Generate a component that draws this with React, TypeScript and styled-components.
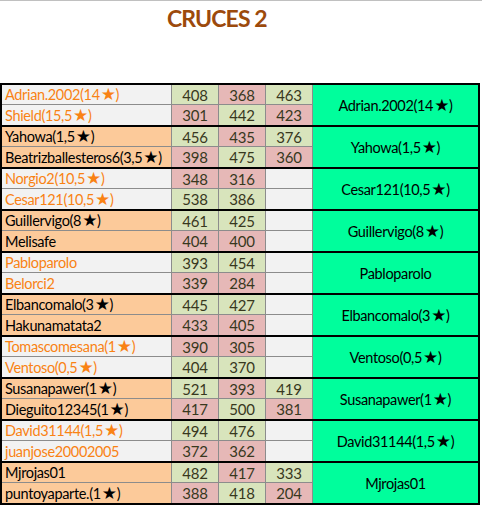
import styled, { createGlobalStyle } from 'styled-components'

const GlobalStyle = createGlobalStyle`
  html, body {
    margin: 0;
    padding: 0;
    background: #ffffff;
  }
`

const Page = styled.div`
  width: 482px;
  height: 508px;
  border-top: 1px solid #c0c0c0;
  box-sizing: border-box;
  font-family: Lato, "Open Sans", sans-serif;
  overflow: hidden;
`

const Title = styled.h1`
  margin: 0;
  padding: 3px 0 0 167px;
  height: 82px;
  box-sizing: border-box;
  font-size: 23px;
  font-weight: 700;
  color: #9c4a0c;
  letter-spacing: -0.9px;
`

const Table = styled.div`
  width: 480px;
  border: 2px solid #000;
  border-top: none;
  box-sizing: border-box;
`

const Pair = styled.div`
  display: grid;
  grid-template-columns: 170px 47px 47px 47px 1fr;
  grid-template-rows: 20px 20px;
  border-top: 2px solid #000;
`

const Name = styled.div<{ $alt: boolean; $first?: boolean }>`
  display: flex;
  align-items: center;
  padding-left: 3px;
  font-size: 14.5px;
  letter-spacing: -0.35px;
  white-space: nowrap;
  overflow: hidden;
  background: ${p => (p.$alt ? '#fcca9a' : '#f2f2f2')};
  color: ${p => (p.$alt ? '#000' : '#f98214')};
  border-right: 1px solid #8c8c8c;
  border-bottom: ${p => (p.$first ? '1px solid #8c8c8c' : 'none')};
`

const Num = styled.div<{ $tone: 'g' | 'r' | 'e'; $first?: boolean }>`
  display: flex;
  align-items: center;
  justify-content: center;
  font-size: 15px;
  letter-spacing: -0.2px;
  color: #38381e;
  background: ${p => (p.$tone === 'g' ? '#d8e4bc' : p.$tone === 'r' ? '#e6b8b7' : '#f2f2f2')};
  border-right: 1px solid #8c8c8c;
  border-bottom: ${p => (p.$first ? '1px solid #8c8c8c' : 'none')};
`

const Winner = styled.div`
  grid-column: 5;
  grid-row: 1 / span 2;
  display: flex;
  align-items: center;
  justify-content: center;
  background: #00fe9c;
  color: #000;
  font-size: 14.5px;
  letter-spacing: -0.35px;
  white-space: nowrap;
`

const Star = styled.span`
  font-family: "DejaVu Sans", sans-serif;
  font-size: 17px;
  line-height: 1;
  margin: 0 0 0 1px;
`

// names keep the star as real text, just set in a font whose ★ is fuller
const Label: React.FC<{ text: string }> = ({ text }) => {
  const parts = text.split('★')
  return (
    <>
      {parts.map((p, i) => (
        <span key={i}>
          {p}
          {i < parts.length - 1 && <Star>★</Star>}
        </span>
      ))}
    </>
  )
}

type Cell = [string, 'g' | 'r' | 'e']

type Match = {
  a: string
  b: string
  ra: Cell[]
  rb: Cell[]
  win: string
}

const matches: Match[] = [
  { a: 'Adrian.2002(14★)', b: 'Shield(15,5★)', ra: [['408', 'g'], ['368', 'r'], ['463', 'g']], rb: [['301', 'r'], ['442', 'g'], ['423', 'r']], win: 'Adrian.2002(14★)' },
  { a: 'Yahowa(1,5★)', b: 'Beatrizballesteros6(3,5★)', ra: [['456', 'g'], ['435', 'r'], ['376', 'g']], rb: [['398', 'r'], ['475', 'g'], ['360', 'r']], win: 'Yahowa(1,5★)' },
  { a: 'Norgio2(10,5★)', b: 'Cesar121(10,5★)', ra: [['348', 'r'], ['316', 'r'], ['', 'e']], rb: [['538', 'g'], ['386', 'g'], ['', 'e']], win: 'Cesar121(10,5★)' },
  { a: 'Guillervigo(8★)', b: 'Melisafe', ra: [['461', 'g'], ['425', 'g'], ['', 'e']], rb: [['404', 'r'], ['400', 'r'], ['', 'e']], win: 'Guillervigo(8★)' },
  { a: 'Pabloparolo', b: 'Belorci2', ra: [['393', 'g'], ['454', 'g'], ['', 'e']], rb: [['339', 'r'], ['284', 'r'], ['', 'e']], win: 'Pabloparolo' },
  { a: 'Elbancomalo(3★)', b: 'Hakunamatata2', ra: [['445', 'g'], ['427', 'g'], ['', 'e']], rb: [['433', 'r'], ['405', 'r'], ['', 'e']], win: 'Elbancomalo(3★)' },
  { a: 'Tomascomesana(1★)', b: 'Ventoso(0,5★)', ra: [['390', 'r'], ['305', 'r'], ['', 'e']], rb: [['404', 'g'], ['370', 'g'], ['', 'e']], win: 'Ventoso(0,5★)' },
  { a: 'Susanapawer(1★)', b: 'Dieguito12345(1★)', ra: [['521', 'g'], ['393', 'r'], ['419', 'g']], rb: [['417', 'r'], ['500', 'g'], ['381', 'r']], win: 'Susanapawer(1★)' },
  { a: 'David31144(1,5★)', b: 'juanjose20002005', ra: [['494', 'g'], ['476', 'g'], ['', 'e']], rb: [['372', 'r'], ['362', 'r'], ['', 'e']], win: 'David31144(1,5★)' },
  { a: 'Mjrojas01', b: 'puntoyaparte.(1★)', ra: [['482', 'g'], ['417', 'r'], ['333', 'g']], rb: [['388', 'r'], ['418', 'g'], ['204', 'r']], win: 'Mjrojas01' },
]

const App: React.FC = () => {
  return (
    <Page>
      <GlobalStyle />
      <Title>CRUCES 2</Title>
      <Table>
        {matches.map((m, i) => {
          const alt = i % 2 === 1
          return (
            <Pair key={i}>
              <Name $alt={alt} $first><Label text={m.a} /></Name>
              {m.ra.map(([v, t], j) => (
                <Num key={'a' + j} $tone={t} $first>{v}</Num>
              ))}
              <Winner><Label text={m.win} /></Winner>
              <Name $alt={alt}><Label text={m.b} /></Name>
              {m.rb.map(([v, t], j) => (
                <Num key={'b' + j} $tone={t}>{v}</Num>
              ))}
            </Pair>
          )
        })}
      </Table>
    </Page>
  )
}

export default App
